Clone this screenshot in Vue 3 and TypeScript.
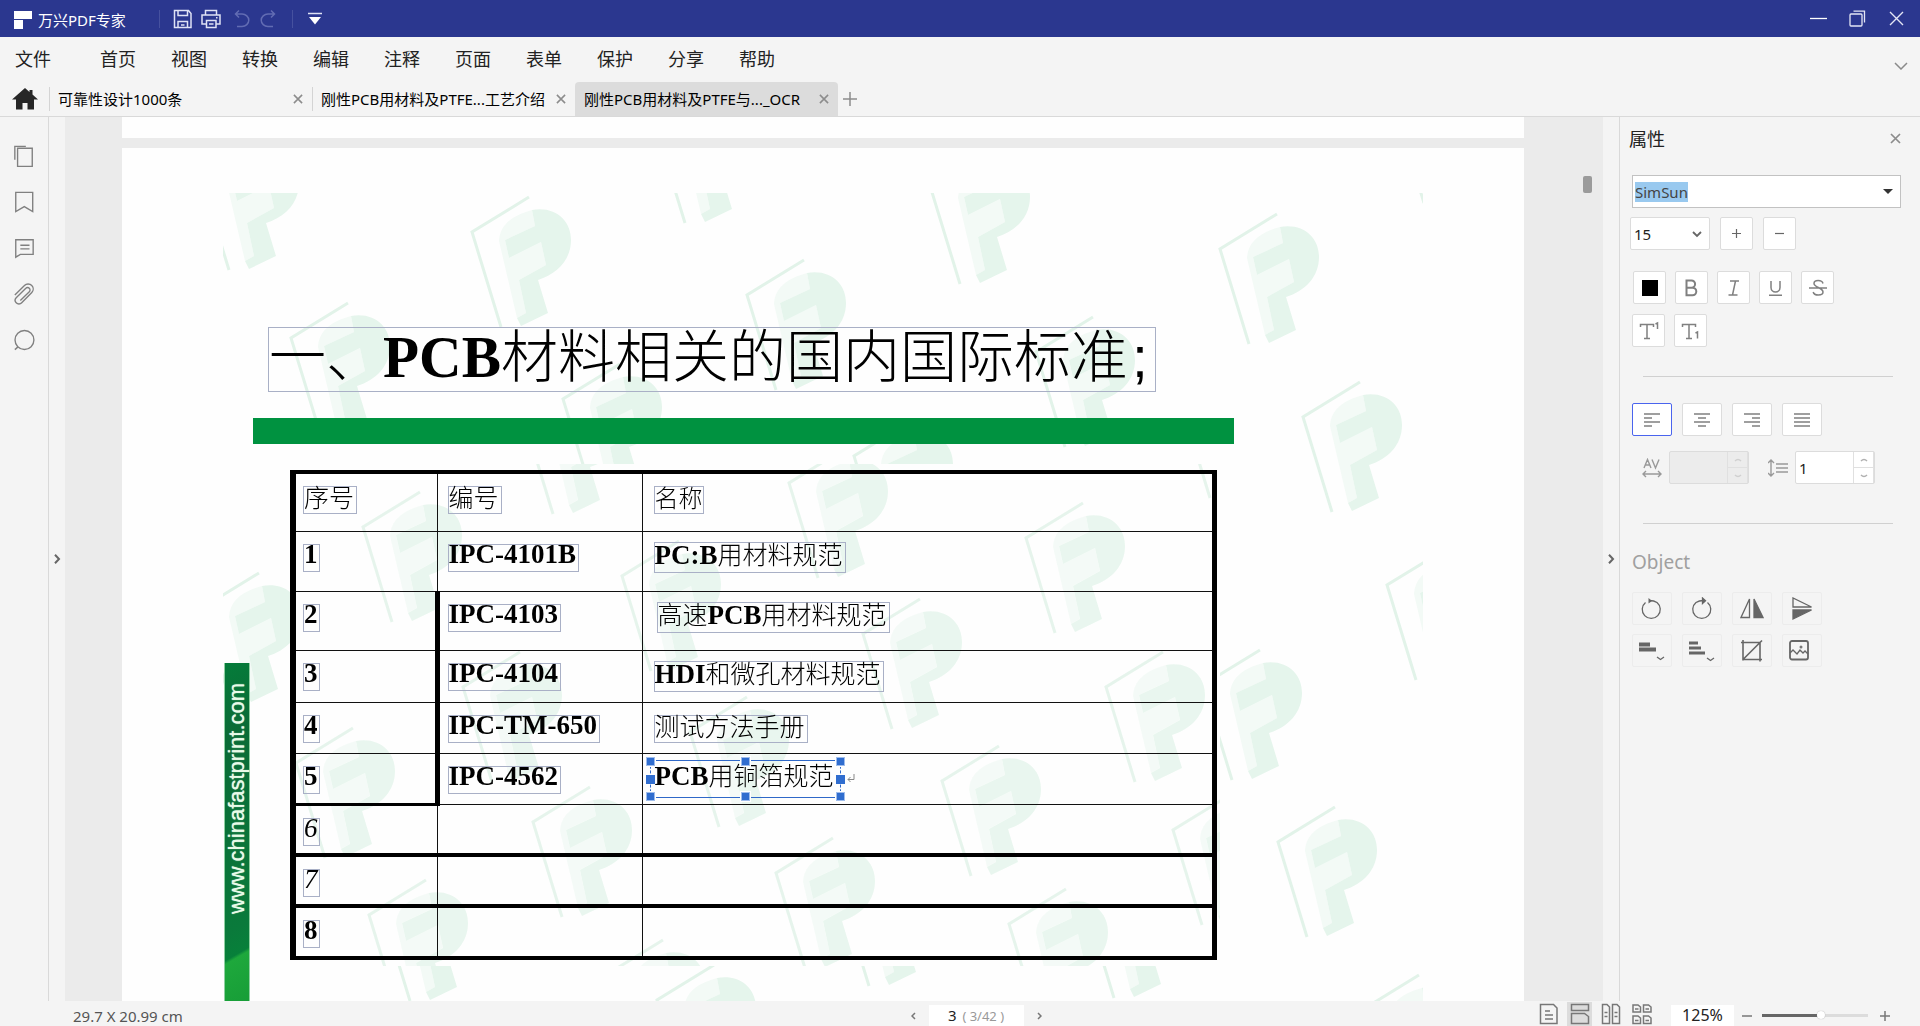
<script setup lang="ts">
import { onMounted, ref } from 'vue'

interface Run { t: string; b?: boolean }
interface Row { no: Run[]; code: Run[]; name: Run[]; look?: string; selected?: boolean }

const menus: string[] = ['首页', '视图', '转换', '编辑', '注释', '页面', '表单', '保护', '分享', '帮助']
const tabs = [
  { label: '可靠性设计1000条', active: false },
  { label: '刚性PCB用材料及PTFE...工艺介绍', active: false },
  { label: '刚性PCB用材料及PTFE与..._OCR', active: true },
]

const rows: Row[] = [
  { no: [{ t: '1', b: true }], code: [{ t: 'IPC-4101B', b: true }], name: [{ t: 'PC:B', b: true }, { t: '用材料规范' }], look: 'tall' },
  { no: [{ t: '2', b: true }], code: [{ t: 'IPC-4103', b: true }], name: [{ t: '高速' }, { t: 'PCB', b: true }, { t: '用材料规范' }], look: 'tall indent' },
  { no: [{ t: '3', b: true }], code: [{ t: 'IPC-4104', b: true }], name: [{ t: 'HDI', b: true }, { t: '和微孔材料规范' }], look: 'tall' },
  { no: [{ t: '4', b: true }], code: [{ t: 'IPC-TM-650', b: true }], name: [{ t: '测试方法手册' }], look: 'head' },
  { no: [{ t: '5', b: true }], code: [{ t: 'IPC-4562', b: true }], name: [{ t: 'PCB', b: true }, { t: '用铜箔规范' }], look: 'selected', selected: true },
  { no: [{ t: '6' }], code: [], name: [] },
  { no: [{ t: '7' }], code: [], name: [] },
  { no: [{ t: '8', b: true }], code: [], name: [] },
]

// Watermark origins on the slide background and inside the table picture.
const outerMarks: number[][] = [
  [-23, -18], [249, 39], [68, 145], [524, 102], [997, 56], [1080, 224], [340, 206], [433, -65], [708, -4],
  [813, 159], [631, 263], [1172, -85], [-21, 415], [980, 492], [1055, 649], [1164, 392], [158, 713],
  [434, 807], [617, 698], [862, 710], [1139, 817],
]
const innerMarks: number[][] = [
  [140, 334], [301, 226], [399, 383], [240, 494], [73, 570], [310, 629], [146, 722], [566, 290], [803, 345],
  [640, 441], [883, 494], [467, 539], [719, 588], [553, 680], [786, 731], [950, 637], [958, 210], [383, 782],
]

const fontName = ref('SimSun')
const fontSize = ref('15')
const lineSpacing = ref('1')
const zoom = ref(56)
const fontInput = ref<HTMLInputElement | null>(null)

onMounted(() => {
  fontInput.value?.focus()
  fontInput.value?.select()
})
</script>

<template>
  <div class="app">
    <header class="titlebar">
      <svg class="logo" width="18" height="18" viewBox="0 0 18 18"><path d="M0 0h18v8H0zM0 9h9v9H0z" fill="#fff" /></svg>
      <span class="appname">万兴PDF专家</span>
      <i class="tsep first"></i>
      <button class="tbtn" aria-label="保存">
        <svg width="20" height="20" viewBox="0 0 20 20" fill="none" stroke="#dfe2f5" stroke-width="1.5"><path d="M1.5 1.5h14l2.500 3v14h-16.500zM5 1.500v5h9.500v-5M5 18.500v-6h9.500v6M8 16h3.500" /></svg>
      </button>
      <button class="tbtn print" aria-label="打印">
        <svg width="20" height="20" viewBox="0 0 20 20" fill="none" stroke="#dfe2f5" stroke-width="1.500"><path d="M4.500 6V1.500h11V6M5 15H1V6h18v9h-4M5.500 11.500h9.500v7H5.500zM8 15h4.500M15 8.800h1.500" /></svg>
      </button>
      <button class="tbtn undo" aria-label="撤销">
        <svg width="16" height="20" viewBox="0 0 16 20" fill="none" stroke="#626cb3" stroke-width="1.500"><path d="M5 1.500L1.500 5L5 8.500M1.500 5H8a6.500 6 0 0 1 0 12.500H3" /></svg>
      </button>
      <button class="tbtn redo" aria-label="重做">
        <svg width="16" height="20" viewBox="0 0 16 20" fill="none" stroke="#626cb3" stroke-width="1.500"><path d="M11 1.500L14.500 5L11 8.500M14.500 5H8a6.500 6 0 0 0 0 12.500H13" /></svg>
      </button>
      <i class="tsep"></i>
      <button class="tbtn more" aria-label="更多">
        <svg width="14" height="13" viewBox="0 0 14 13"><path d="M0 1.500h14" stroke="#dfe2f5" stroke-width="1.500" /><path d="M1 5h12l-6 7.500z" fill="#fff" /></svg>
      </button>
      <div class="wincontrols">
        <button aria-label="最小化"><svg width="17" height="17" viewBox="0 0 17 17"><path d="M0 8.500h17" stroke="#fff" stroke-width="1.300" /></svg></button>
        <button aria-label="还原"><svg width="17" height="17" viewBox="0 0 17 17" fill="none" stroke="#e4e6f5" stroke-width="1.300"><rect x="1" y="4" width="12" height="12" rx="1" /><path d="M4.500 1.200H15.500V12.500" /></svg></button>
        <button aria-label="关闭"><svg width="17" height="17" viewBox="0 0 17 17"><path d="M2 2l13 13M15 2L2 15" stroke="#e4e6f5" stroke-width="1.400" /></svg></button>
      </div>
    </header>

    <nav class="menubar">
      <button class="file">文件</button>
      <button v-for="m in menus" :key="m">{{ m }}</button>
      <button class="collapse" aria-label="收起"><svg width="14" height="8" viewBox="0 0 14 8"><path d="M1 1l6 6 6-6" fill="none" stroke="#8a8a8a" stroke-width="1.500" /></svg></button>
    </nav>

    <div class="tabbar">
      <button class="home" aria-label="主页">
        <svg width="26" height="22" viewBox="0 0 26 22" fill="#262626"><path d="M13 0L0 11.500h4V21.500h6.500V15h5v6.500H22V11.500h4L20.500 6.500V2h-3v2z" /></svg>
      </button>
      <div v-for="t in tabs" :key="t.label" class="tab" :class="{ active: t.active }">
        <button class="tablabel">{{ t.label }}</button>
        <button class="x" aria-label="关闭标签"><svg width="10" height="10" viewBox="0 0 11 11"><path d="M1 1l9 9M10 1l-9 9" stroke="#8c8c8c" stroke-width="1.700" /></svg></button>
      </div>
      <button class="plus" aria-label="新建标签"><svg width="14" height="14" viewBox="0 0 14 14"><path d="M7 0v14M0 7h14" stroke="#8c8c8c" stroke-width="1.500" /></svg></button>
    </div>

    <main class="body">
      <aside class="rail">
        <button aria-label="缩略图"><svg viewBox="0 0 24 24"><path d="M2 16V1.500h12M5 3.500h16v20H5z" /></svg></button>
        <button aria-label="书签"><svg viewBox="0 0 24 24"><path d="M3 1.500h18.500v21L12.300 17 3 22.500z" /></svg></button>
        <button aria-label="注释"><svg viewBox="0 0 24 24"><path d="M3 3h19v16H8l-5 3zM8 9h10M8 13h10" /></svg></button>
        <button aria-label="附件"><svg viewBox="0 0 24 24"><path d="M2 13L12.500 2.800a5.400 5.400 0 0 1 8 0a5.400 5.400 0 0 1 0 7.500L9.500 21.500a4 4 0 0 1-6 0a4 4 0 0 1 0-5.500L14 5.800a2.600 2.600 0 0 1 3.800 0a2.600 2.600 0 0 1 0 3.700L8 19" /></svg></button>
        <button aria-label="搜索"><svg viewBox="0 0 24 24"><circle cx="12.500" cy="12" r="10.300" /><path d="M5.500 19.500L2 22.500" /></svg></button>
      </aside>
      <button class="gutter" aria-label="展开"><svg width="7" height="10" viewBox="0 0 7 10"><path d="M1 .800L5 5 1 9.200" /></svg></button>

      <section class="canvas">
        <div class="page previous"></div>
        <div class="page">
          <div class="slide">
            <svg class="marks" width="1200" height="824" viewBox="0 0 1200 824">
              <defs>
                <g id="mark">
                  <path d="M57-35L0 0l29 95" fill="none" stroke="#e2f3e9" stroke-width="3" />
                  <path d="M60-22C38-16 28-6 27 9L45 86l9-5-7-33 27-15-5-23-32 16-4-18 30-14z" fill="#f3faf6" />
                  <path d="M60-22C84-26 99-11 99 8c0 20-14 34-33 40l10 33-27 13-4-8 9-5-7-33 27-15-5-23-32 16-4-18 30-14z" fill="#e5f5ec" />
                </g>
                <clipPath id="outer"><path clip-rule="evenodd" d="M0 0h1200v824H0zM67 271v502h930V271z" /></clipPath>
                <clipPath id="inner"><path d="M67 271h930v502H67z" /></clipPath>
              </defs>
              <g clip-path="url(#outer)"><use v-for="(m, i) in outerMarks" :key="i" href="#mark" :x="m[0]" :y="m[1]" /></g>
              <g clip-path="url(#inner)" opacity="0.85"><use v-for="(m, i) in innerMarks" :key="i" href="#mark" :x="m[0]" :y="m[1]" /></g>
            </svg>

            <div class="banner"><span>www.chinafastprint.com</span></div>

            <h1 class="title">一、<b>PCB</b>材料相关的国内国际标准<span class="semi">;</span></h1>
            <div class="rule"></div>

            <table class="grid">
              <thead>
                <tr>
                  <th class="c1"><span class="box head">序号</span></th>
                  <th class="c2"><span class="box head">编号</span></th>
                  <th><span class="box head small">名称</span></th>
                </tr>
              </thead>
              <tbody>
                <tr v-for="(r, i) in rows" :key="i" :class="'r' + (i + 1)">
                  <td>
                    <span class="box num"><component :is="s.b ? 'b' : 'i'" v-for="s in r.no" :key="s.t">{{ s.t }}</component></span>
                  </td>
                  <td>
                    <span v-if="r.code.length" class="box"><b v-for="s in r.code" :key="s.t">{{ s.t }}</b></span>
                  </td>
                  <td>
                    <span v-if="r.name.length" class="box" :class="r.look"><component :is="s.b ? 'b' : 'span'" v-for="s in r.name" :key="s.t">{{ s.t }}</component><span v-if="r.selected" class="frame"><i v-for="n in 6" :key="n"></i></span></span>
                    <svg v-if="r.selected" class="ret" width="8" height="9" viewBox="0 0 8 9"><path d="M7 0v5.500H1M3.500 3L1 5.500 3.500 8" fill="none" stroke="#888" /></svg>
                  </td>
                </tr>
              </tbody>
            </table>
          </div>
        </div>
        <div class="thumb"></div>
      </section>

      <button class="gutter" aria-label="收起面板"><svg width="7" height="10" viewBox="0 0 7 10"><path d="M1 .800L5 5 1 9.200" /></svg></button>

      <aside class="panel">
        <div class="phead">
          <h2>属性</h2>
          <button aria-label="关闭面板"><svg width="11" height="11" viewBox="0 0 11 11"><path d="M1 1l9 9M10 1l-9 9" stroke="#8c8c8c" stroke-width="1.700" /></svg></button>
        </div>
        <div class="fontbox">
          <input ref="fontInput" v-model="fontName" aria-label="字体" />
          <button aria-label="选择字体"><svg width="10" height="5" viewBox="0 0 10 5"><path d="M0 0h10L5 5z" fill="#333" /></svg></button>
        </div>
        <div class="row sizes">
          <span class="sizebox">
            <select v-model="fontSize" aria-label="字号"><option>15</option><option>18</option></select>
            <svg width="10" height="7" viewBox="0 0 10 7"><path d="M1 1l4 4 4-4" fill="none" stroke="#666" stroke-width="1.800" /></svg>
          </span>
          <button class="sq" aria-label="增大"><svg width="9" height="9" viewBox="0 0 9 9"><path d="M4.500 0v9M0 4.500h9" stroke="#666" stroke-width="1.200" /></svg></button>
          <button class="sq" aria-label="减小"><svg width="9" height="9" viewBox="0 0 9 9"><path d="M0 4.500h9" stroke="#666" stroke-width="1.200" /></svg></button>
        </div>
        <div class="row styles">
          <button class="sq" aria-label="颜色"><i class="swatch"></i></button>
          <button class="sq" aria-label="粗体"><svg width="20" height="20" viewBox="0 0 20 20"><path d="M4.500 2.500h5a3.500 3.500 0 0 1 0 7.200h-5zM4.500 9.700h6a3.700 3.700 0 0 1 0 7.600h-6z" stroke-width="2" /></svg></button>
          <button class="sq" aria-label="斜体"><svg width="20" height="20" viewBox="0 0 20 20"><path d="M6 3h9M4.500 17h9M11.500 3l-3 14" /></svg></button>
          <button class="sq" aria-label="下划线"><svg width="20" height="20" viewBox="0 0 20 20"><path d="M5 3v6.500a4.500 4.500 0 0 0 9 0V3M3 17.300h13" /></svg></button>
          <button class="sq" aria-label="删除线"><svg width="20" height="20" viewBox="0 0 20 20"><path d="M15 5.500c-1-4-9-4-9 0C6 9.500 15 9.500 15 14c0 4-9 4-9.800 0M1 10h18" /></svg></button>
        </div>
        <div class="row supers">
          <button class="sq" aria-label="上标"><svg width="20" height="20" viewBox="0 0 20 20"><path d="M1.500 6V3.500h13V6M8 3.500V17.500M5 17.500h6M16.500 3l2-1v6" /></svg></button>
          <button class="sq" aria-label="下标"><svg width="20" height="20" viewBox="0 0 20 20"><path d="M1.500 6V3.500h13V6M8 3.500V17.500M5 17.500h6M14.500 12l2-1v6.500" /></svg></button>
        </div>
        <hr class="line one" />
        <div class="row aligns">
          <button class="wide on" aria-label="左对齐"><svg width="16" height="14" viewBox="0 0 16 14"><path d="M0 1h16M0 5h8M0 9h16M0 13h8" /></svg></button>
          <button class="wide" aria-label="居中"><svg width="16" height="14" viewBox="0 0 16 14"><path d="M0 1h16M4 5h8M0 9h16M4 13h8" /></svg></button>
          <button class="wide" aria-label="右对齐"><svg width="16" height="14" viewBox="0 0 16 14"><path d="M0 1h16M8 5h8M0 9h16M8 13h8" /></svg></button>
          <button class="wide" aria-label="两端对齐"><svg width="16" height="14" viewBox="0 0 16 14"><path d="M0 1h16M0 5h16M0 9h16M0 13h16" /></svg></button>
        </div>
        <div class="row spacing">
          <svg width="20" height="20" viewBox="0 0 20 20" fill="none" stroke="#999" stroke-width="1.400"><path d="M2 10L5.500 1.500 9 10M3.500 7h4M10 1.500L13.500 10 17 1.500M1 16h18M4 13l-3 3 3 3M16 13l3 3-3 3" /></svg>
          <span class="spin off">
            <input disabled aria-label="字间距" />
            <span class="steps"><button disabled aria-label="增加字间距"><svg width="8" height="4" viewBox="0 0 8 4"><path d="M1 3q3-3 6 0" /></svg></button><button disabled aria-label="减少字间距"><svg width="8" height="4" viewBox="0 0 8 4"><path d="M1 1q3 3 6 0" /></svg></button></span>
          </span>
          <svg width="20" height="20" viewBox="0 0 20 20" fill="none" stroke="#999" stroke-width="1.400"><path d="M3 2v16M0 5l3-3 3 3M0 15l3 3 3-3M8 6h12M8 10h12M8 14h12" /></svg>
          <span class="spin">
            <input v-model="lineSpacing" aria-label="行间距" />
            <span class="steps"><button aria-label="增加行间距"><svg width="8" height="4" viewBox="0 0 8 4"><path d="M1 3q3-3 6 0" /></svg></button><button aria-label="减少行间距"><svg width="8" height="4" viewBox="0 0 8 4"><path d="M1 1q3 3 6 0" /></svg></button></span>
          </span>
        </div>
        <hr class="line two" />
        <h3>Object</h3>
        <div class="objects">
          <button aria-label="向左旋转"><svg width="24" height="24" viewBox="0 0 24 24"><path d="M5.500 5.500A9 9 0 1 0 17 5.500Q14 3.500 9.500 3.500" /><path d="M8.500 1v5.500L12 4z" fill="#666" stroke="none" /></svg></button>
          <button aria-label="向右旋转"><svg width="24" height="24" viewBox="0 0 24 24"><path d="M17.500 5.500A9 9 0 1 1 6 5.500Q9 3.500 13.500 3.500" /><path d="M12.500 1v5.500l3-2.800z" fill="#666" /></svg></button>
          <button aria-label="水平翻转"><svg width="24" height="24" viewBox="0 0 24 24"><path d="M9.500 2v18.500H1z" /><path d="M14 2v18.500h9z" fill="#666" /></svg></button>
          <button aria-label="垂直翻转"><svg width="24" height="24" viewBox="0 0 24 24"><path d="M3 1v9h18.500z" /><path d="M3 13h18.500L3 22z" fill="#666" /></svg></button>
          <button aria-label="对齐"><svg width="28" height="24" viewBox="0 0 28 24"><path d="M1 5.500h11M1 10.500h17" stroke-width="4" /><path d="M19 18l3.500 2.500L26 18" /></svg></button>
          <button aria-label="分布"><svg width="28" height="24" viewBox="0 0 28 24"><path d="M1 4h9M1 9h12M1 14h16" stroke-width="3" /><path d="M19 19l3.500 2.500L26 19" /></svg></button>
          <button aria-label="裁剪"><svg width="24" height="24" viewBox="0 0 24 24"><path d="M3 1v20.500M1 3.500h19v19M3 20.500h19M3.500 20L22 1.500" stroke-width="1.600" /></svg></button>
          <button class="swap" aria-label="替换图片"><svg width="24" height="24" viewBox="0 0 24 24"><rect x="3" y="2" width="18" height="18.500" rx="2" stroke-width="1.800" /><path d="M3 14l3-3 4 4 3-4 3 3 2-2 3 3" /><circle cx="14" cy="8" r="1.500" fill="#777" stroke="none" /></svg></button>
        </div>
      </aside>
    </main>

    <footer class="status">
      <span class="dims">29.7 X 20.99 cm</span>
      <div class="pager">
        <button aria-label="上一页"><svg width="5" height="8" viewBox="0 0 5 8"><path d="M4 1L1 4l3 3" /></svg></button>
        <span class="pageno">3 <small>( 3/42 )</small></span>
        <button aria-label="下一页"><svg width="5" height="8" viewBox="0 0 5 8"><path d="M1 1l3 3-3 3" /></svg></button>
      </div>
      <div class="view">
        <button aria-label="单页"><svg viewBox="0 0 20 22"><path d="M1.500 1.500h13l3.500 3.500v15.500H1.500zM6 8h5M6 12h8M6 16h8" /></svg></button>
        <button class="on" aria-label="连续"><svg viewBox="0 0 20 22"><path d="M1.500 1.500h17v6h-17zM1.500 10.500h13l4 3v7h-17z" /></svg></button>
        <button aria-label="双页"><svg viewBox="0 0 20 22"><path d="M1.500 1.500H6l2.500 2.500v16.500h-7zM11.500 1.500H16l2.500 2.500v16.500h-7zM3.500 9.500h3M3.500 13.500h3M13.500 9.500h3M13.500 13.500h3" /></svg></button>
        <button aria-label="双页连续"><svg viewBox="0 0 20 22"><path d="M1 2h5l2.500 2v5H1zM11.500 2h5L19 4v5h-7.500zM1 13h5l2.500 2v5.500H1zM11.500 13h5l2.500 2v5.500h-7.500zM3 6h3.500M13.500 6H17M3 17.500h3.500M13.500 17.500H17" /></svg></button>
        <span class="percent">125%</span>
        <button class="zo" aria-label="缩小"><svg viewBox="0 0 10 10"><path d="M0 5h10" /></svg></button>
        <input v-model.number="zoom" type="range" min="0" max="100" aria-label="缩放" />
        <button class="zo" aria-label="放大"><svg viewBox="0 0 10 10"><path d="M0 5h10M5 0v10" /></svg></button>
      </div>
    </footer>
  </div>
</template>

<style>
html, body { margin: 0; }
</style>

<style scoped>
* { box-sizing: border-box; }
button, input, select { font: inherit; color: inherit; background: none; border: 0; padding: 0; margin: 0; outline: none; }
button { display: flex; align-items: center; justify-content: center; }
.app { display: flex; flex-direction: column; height: 100vh; background: #f4f4f4; overflow: hidden; color: #222; font: 15px/20px "Noto Sans", "Noto Sans CJK SC", sans-serif; }

.titlebar { display: flex; align-items: center; flex: 0 0 37px; padding: 0 15px 0 14px; background: #2b378f; color: #fff; }
.logo { margin-top: 2px; }
.appname { margin-left: 6px; margin-top: 3px; }
.tsep { width: 1px; height: 18px; background: #46519f; margin-left: 16px; }
.tsep.first { margin-left: 33px; }
.tbtn { margin-left: 13px; }
.tbtn.print { margin-left: 8px; }
.tbtn.redo { margin-left: 10px; }
.tbtn.more { margin-left: 15px; }
.wincontrols { display: flex; gap: 22px; margin-left: auto; }

.menubar { display: flex; align-items: center; flex: 0 0 45px; padding: 0 12px 1px 15px; font-size: 18px; gap: 35px; }
.menubar .file { margin-right: 14px; }
.menubar .collapse { margin: 14px 0 0 auto; }

.tabbar { display: flex; flex: 0 0 35px; border-bottom: 1px solid #d9d9d9; color: #000; }
.home { width: 49px; }
.tab { display: flex; align-items: center; justify-content: space-between; width: 263px; padding: 0 8px 0 9px; position: relative; }
.tab::before { content: ""; position: absolute; left: 0; top: 5px; bottom: 5px; width: 1px; background: #d4d4d4; }
.tab.active { background: #dcdcdc; border-radius: 4px 4px 0 0; }
.tab.active::before { display: none; }
.tab .x { width: 12px; }
.plus { margin-left: 5px; width: 14px; }

.body { display: flex; flex: 1; min-height: 0; }
.rail { display: flex; flex-direction: column; align-items: center; flex: 0 0 49px; border-right: 1px solid #d9d9d9; padding-top: 28px; gap: 24px; }
.rail svg { width: 22px; height: 22px; fill: none; stroke: #808080; stroke-width: 1.5; display: block; }
.gutter { flex: 0 0 16px; }
.gutter svg { fill: none; stroke: #666; stroke-width: 2; }
.canvas { display: flex; flex-direction: column; flex: 1; min-width: 0; background: #ebebeb; padding: 0 79px 0 57px; position: relative; overflow: hidden; }
.page { flex: 1; min-height: 0; background: #fefefe; overflow: hidden; }
.page.previous { flex: 0 0 21px; margin-bottom: 10px; }
.thumb { position: absolute; right: 11px; top: 59px; width: 9px; height: 17px; border-radius: 2px; background: #9b9b9b; }

.slide { position: relative; width: 1200px; height: 824px; margin: 45px 0 0 101px; padding-top: 134px; color: #000; font-family: "Liberation Serif", "Noto Sans CJK SC", serif; font-weight: 300; }
.marks { position: absolute; left: 0; top: 0; }
.banner { position: absolute; left: 1px; top: 470px; width: 26px; height: 354px; display: flex; justify-content: center; padding-top: 20px; background: linear-gradient(150deg, #057c3a 0, #0a6b36 20%, #0a7a3b 74%, #07803a 81%, #1ea83c 82%, #159a36 100%); border: solid #8fd0a2; border-width: 0 1px; color: #e9fbe9; font: 22px/24px "Liberation Sans", sans-serif; text-shadow: 0 0 1px #e9fbe9; }
.banner span { writing-mode: vertical-rl; transform: rotate(180deg); height: 236px; text-align: right; white-space: nowrap; }
.title { position: relative; width: 888px; height: 65px; margin: 0 0 0 45px; border: 1px solid #a9b0c6; font-size: 57px; line-height: 58px; font-weight: 300; white-space: nowrap; }
.title b { font-size: 59px; }
.title b, .box b { font-weight: 700; }
.semi { margin-left: 4px; font-family: "Liberation Sans", sans-serif; }
.rule { position: relative; width: 981px; height: 26px; margin: 26px 0 26px 30px; background: #009240; }
.grid { position: relative; width: 927px; margin-left: 67px; border-collapse: collapse; table-layout: fixed; border: solid #000; border-width: 4px 5px 4px 6px; }
.grid th, .grid td { border: 1px solid #111; padding: 10px 0 0 10px; text-align: left; vertical-align: top; font-weight: 300; }
.grid th:first-child, .grid td:first-child { padding-left: 7px; border-left: 6px solid #000; }
.grid th:last-child, .grid td:last-child { padding-left: 11px; border-right: 5px solid #000; }
.grid .c1 { width: 144px; }
.grid .c2 { width: 205px; }
.grid tr { height: 51px; }
.grid thead tr, .grid .r2 { height: 59px; }
.grid .r1 { height: 60px; }
.grid .r3, .grid .r8 { height: 52px; }
.grid thead th { border-top: 4px solid #000; }
.r2 td:first-child, .r3 td:first-child, .r4 td:first-child, .r5 td:first-child { border-right: 5px solid #000; }
.r2 td:nth-child(2), .r3 td:nth-child(2), .r4 td:nth-child(2), .r5 td:nth-child(2) { padding-left: 8px; }
.grid .r5 td:first-child { border-bottom: 3px solid #000; }
.grid .r6 td, .grid .r7 td, .grid .r8 td { border-bottom: 4px solid #000; }
.box { display: block; float: left; height: 28px; min-width: 17px; margin-top: 2px; padding: 0 2px 0 0; border: 1px solid #a9b0c6; font-size: 25px; line-height: 18px; white-space: nowrap; position: relative; }
.box b, .box i { font-size: 27px; }
.box i { font-weight: 400; }
.box.num { padding: 0; width: 17px; }
.box.head { padding-top: 3px; }
.box.head.small { font-size: 24px; padding-right: 0; }
.box.tall { height: 31px; margin-top: 0; padding-top: 3px; }
.box.indent { margin-left: 3px; }
.box.selected { border-color: transparent; }
.frame { position: absolute; inset: -7px -5px -5px -5px; border: solid #2f68c8; border-width: 1px 0; }
.frame::before { content: ""; position: absolute; inset: 0; border: dashed #2f68c8; border-width: 0 1px; }
.frame i { position: absolute; width: 9px; height: 9px; background: #306dcf; border: 1px solid #9fbdec; box-shadow: 0 0 0 1px #fff; }
.frame i:nth-child(1) { left: -4px; top: -4px; }
.frame i:nth-child(2) { left: calc(50% - 4px); top: -4px; }
.frame i:nth-child(3) { right: -4px; top: -4px; }
.frame i:nth-child(4) { left: -4px; bottom: -4px; }
.frame i:nth-child(5) { left: calc(50% - 4px); bottom: -4px; }
.frame i:nth-child(6) { right: -4px; bottom: -4px; }
.frame::after { content: ""; position: absolute; left: -4px; right: -4px; top: calc(50% - 4px); height: 9px; background: linear-gradient(#306dcf, #306dcf) left / 9px 9px no-repeat, linear-gradient(#306dcf, #306dcf) right / 9px 9px no-repeat; }
.ret { float: left; margin: 10px 0 0 10px; }

.panel { flex: 0 0 301px; border-left: 1px solid #d9d9d9; padding: 0 19px 0 12px; }
.phead { display: flex; align-items: center; justify-content: space-between; height: 43px; }
.phead h2 { margin: 0 0 0 -3px; font-size: 18px; font-weight: 400; }
.fontbox { display: flex; align-items: center; margin-top: 15px; height: 33px; border: 1px solid #c2c2c2; background: #fff; }
.fontbox input { flex: 1; min-width: 0; height: 20px; padding-left: 2px; color: #444; }
.fontbox input::selection { background: #99c9ef; color: #444; }
.fontbox button { width: 24px; height: 100%; }
.row { display: flex; align-items: center; }
.sq, .wide, .sizebox { height: 33px; background: #fff; border: 1px solid #dcdcdc; border-radius: 2px; }
.sq { width: 33px; }
.wide { width: 40px; }
.sizes { margin: 9px 0 0 -2px; gap: 10px; }
.sizebox { position: relative; width: 80px; display: flex; align-items: center; }
.sizebox select { appearance: none; width: 100%; height: 100%; padding-left: 3px; }
.sizebox svg { position: absolute; right: 7px; top: 13px; pointer-events: none; }
.styles { margin: 21px 0 0 1px; gap: 9px; }
.styles svg, .supers svg { fill: none; stroke: #808080; stroke-width: 1.5; }
.swatch { width: 16px; height: 16px; background: #000; }
.supers { margin-top: 10px; gap: 9px; }
.line { margin: 0 8px 0 11px; border: 0; border-top: 1px solid #d0d0d0; }
.line.one { margin-top: 29px; }
.line.two { margin-top: 39px; }
.aligns { margin-top: 26px; gap: 10px; }
.wide.on { border-color: #4a64ee; }
.wide svg { fill: none; stroke: #808080; stroke-width: 1.3; }
.spacing { margin: 15px 0 0 10px; gap: 7px; }
.spacing .off { margin-right: 12px; }
.spin { display: flex; width: 80px; height: 33px; border: 1px solid #dcdcdc; border-radius: 2px; background: #fff; }
.spin input { flex: 1; min-width: 0; padding-left: 3px; }
.spin.off { background: #ececec; }
.steps { display: flex; flex-direction: column; flex: 0 0 21px; border-left: 1px solid #e0e0e0; }
.steps button { flex: 1; border-right: 1px solid #e0e0e0; }
.steps button + button { border-top: 1px solid #e0e0e0; }
.steps svg { fill: none; stroke: #b0b0b0; stroke-width: 1.5; }
.off .steps svg { stroke: #d0d0d0; }
h3 { margin: 25px 0 0; font-size: 19px; line-height: 26px; font-weight: 400; color: #a0a0a0; }
.objects { display: grid; grid-template-columns: repeat(4, 40px); gap: 9px 10px; margin-top: 17px; }
.objects button { height: 33px; border: 1px solid #ececec; border-radius: 2px; }
.objects .swap { justify-content: flex-start; padding-left: 4px; }
.objects svg { fill: none; stroke: #666; stroke-width: 1.3; }

.status { display: grid; grid-template-columns: minmax(0, 1fr) auto minmax(0, 1fr); grid-template-rows: 25px; flex: 0 0 25px; padding-left: 32px; color: #555; }
.dims { padding: 5px 0 0 41px; font-size: 15px; line-height: 20px; }
.pager { display: flex; align-items: flex-start; gap: 13px; }
.pager button { height: 8px; margin-top: 11px; }
.pager svg { fill: none; stroke: #777; stroke-width: 1.5; }
.pageno { width: 95px; height: 21px; margin-top: 4px; background: #fff; color: #222; font-size: 15px; line-height: 21px; text-align: center; white-space: nowrap; }
.pageno small { margin-left: 2px; font-size: 13px; color: #999; }
.view { display: flex; align-items: flex-start; justify-content: flex-end; padding-right: 30px; }
.view button { flex: none; width: 25px; height: 24px; margin: 1px 6px 0 0; }
.view .on { background: #dcdcdc; }
.view button svg { width: 20px; height: 22px; fill: none; stroke: #777; stroke-width: 1.5; }
.view .percent { width: 63px; height: 21px; margin: 4px 0 0 11px; background: #fff; color: #222; font-size: 16px; line-height: 21px; text-align: center; }
.view .zo { width: 10px; height: 24px; margin: 3px 0 0 8px; }
.view .zo svg { width: 10px; height: 10px; }
.view input { appearance: none; width: 106px; height: 10px; margin: 9px 4px 0 10px; background: linear-gradient(90deg, #666 56%, #dcdcdc 56%) center / 100% 3px no-repeat; }
.view input::-webkit-slider-thumb { appearance: none; width: 8px; height: 8px; border-radius: 50%; background: #fff; box-shadow: 0 0 1px #999; }
</style>
